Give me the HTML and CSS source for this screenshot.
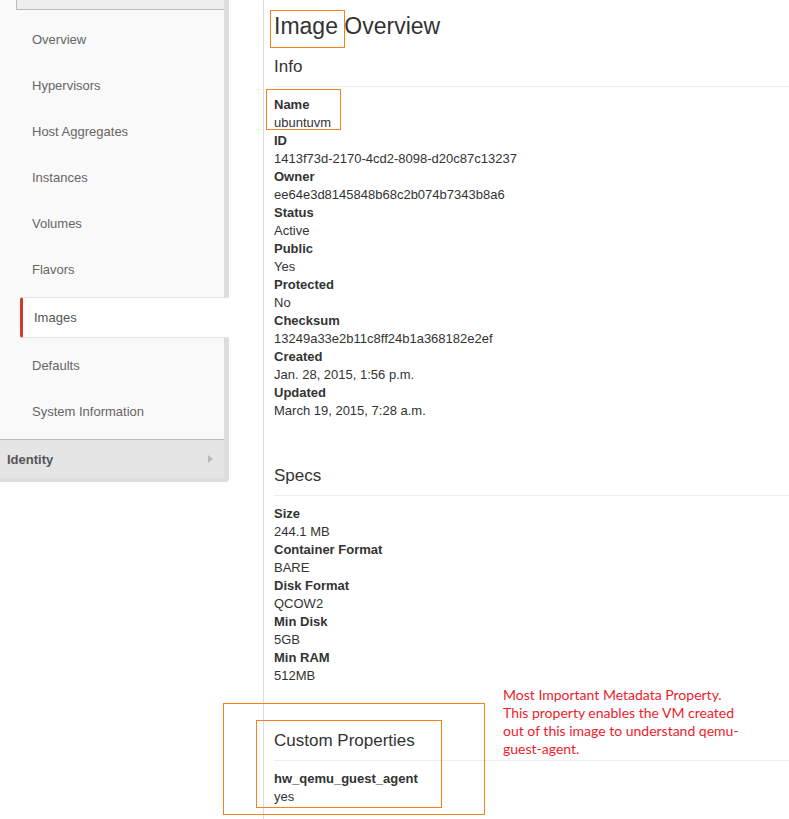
FILE: index.html
```html
<!DOCTYPE html>
<html>
<head>
<meta charset="utf-8">
<title>Image Overview</title>
<link rel="stylesheet" href="styles.css">
</head>
<body>
<div class="page">
  <aside class="sidebar">
    <div class="nav">
      <div class="nav-inner">
        <div class="nav-top"></div>
        <ul class="nav-list">
          <li class="nav-item">Overview</li>
          <li class="nav-item">Hypervisors</li>
          <li class="nav-item">Host Aggregates</li>
          <li class="nav-item">Instances</li>
          <li class="nav-item">Volumes</li>
          <li class="nav-item">Flavors</li>
          <li class="nav-item active">Images</li>
          <li class="nav-item">Defaults</li>
          <li class="nav-item">System Information</li>
        </ul>
        <div class="nav-section">
          <span>Identity</span>
          <span class="caret"></span>
        </div>
      </div>
    </div>
  </aside>
  <main class="main">
    <h1 class="title">Image Overview</h1>

    <h3 class="section-title first">Info</h3>
    <hr class="rule">
    <dl class="props">
      <dt>Name</dt><dd>ubuntuvm</dd>
      <dt>ID</dt><dd>1413f73d-2170-4cd2-8098-d20c87c13237</dd>
      <dt>Owner</dt><dd>ee64e3d8145848b68c2b074b7343b8a6</dd>
      <dt>Status</dt><dd>Active</dd>
      <dt>Public</dt><dd>Yes</dd>
      <dt>Protected</dt><dd>No</dd>
      <dt>Checksum</dt><dd>13249a33e2b11c8ff24b1a368182e2ef</dd>
      <dt>Created</dt><dd>Jan. 28, 2015, 1:56 p.m.</dd>
      <dt>Updated</dt><dd>March 19, 2015, 7:28 a.m.</dd>
    </dl>

    <h3 class="section-title">Specs</h3>
    <hr class="rule">
    <dl class="props">
      <dt>Size</dt><dd>244.1 MB</dd>
      <dt>Container Format</dt><dd>BARE</dd>
      <dt>Disk Format</dt><dd>QCOW2</dd>
      <dt>Min Disk</dt><dd>5GB</dd>
      <dt>Min RAM</dt><dd>512MB</dd>
    </dl>

    <h3 class="section-title">Custom Properties</h3>
    <hr class="rule">
    <dl class="props">
      <dt>hw_qemu_guest_agent</dt><dd>yes</dd>
    </dl>
  </main>

  <div class="mark mark-title"></div>
  <div class="mark mark-name"></div>
  <div class="mark mark-outer"></div>
  <div class="mark mark-inner"></div>
  <p class="note">Most Important Metadata Property.<br>This property enables the VM created<br>out of this image to understand qemu-<br>guest-agent.</p>
</div>
</body>
</html>
```

FILE: styles.css
```css
html, body {
  margin: 0;
  padding: 0;
  background: #ffffff;
}

body {
  font-family: "Liberation Sans", Arial, Helvetica, sans-serif;
  font-size: 13px;
  color: #333333;
}

.page {
  position: relative;
  display: flex;
  width: 789px;
  min-height: 819px;
  overflow: hidden;
}

/* ---------- sidebar ---------- */
.sidebar {
  width: 229px;
  flex: none;
  align-self: flex-start;
}

.nav {
  background: #dddddd;
  padding: 0 5px 4px 0;
  border-bottom-right-radius: 4px;
}

.nav-inner {
  background: #f9f9f9;
}

.nav-top {
  height: 9px;
  margin-left: 16px;
  background: #eeeeee;
  border-left: 1px solid #bbbbbb;
  border-bottom: 1px solid #bbbbbb;
}

.nav-list {
  list-style: none;
  margin: 0;
  padding: 6px 0 5px 0;
}

.nav-item {
  display: flex;
  align-items: center;
  height: 46px;
  padding-left: 32px;
  color: #666666;
  font-size: 13px;
}

.nav-item.active {
  height: 39px;
  margin: 5px -5px 4px 20px;
  padding-left: 11px;
  background: #ffffff;
  border-top: 1px solid #e3e3e3;
  border-bottom: 1px solid #e3e3e3;
  border-left: 3px solid #d23a2b;
  border-radius: 3px 0 0 3px;
  color: #555555;
}

.nav-section {
  display: flex;
  align-items: center;
  justify-content: space-between;
  height: 38px;
  padding: 0 11px 0 7px;
  background: #e5e5e5;
  border-top: 1px solid #bbbbbb;
  font-weight: bold;
  color: #555555;
}

.caret {
  width: 0;
  height: 0;
  border-top: 4px solid transparent;
  border-bottom: 4px solid transparent;
  border-left: 5px solid #bbbbbb;
}

/* ---------- main ---------- */
.main {
  flex: 1;
  margin-left: 34px;
  padding: 1px 0 0 10px;
  border-left: 1px solid #dddddd;
  min-height: 818px;
}

.title {
  margin: 0;
  padding-top: 10px;
  font-size: 23px;
  line-height: 30px;
  font-weight: normal;
  color: #333333;
}

.section-title {
  margin: 46px 0 0 0;
  font-size: 17px;
  line-height: 20px;
  font-weight: normal;
  color: #333333;
}

.section-title.first {
  margin-top: 16px;
}

.rule {
  margin: 9px 0 0 0;
  border: 0;
  border-top: 1px solid #eeeeee;
  height: 0;
}

.props {
  margin: 9px 0 0 0;
  line-height: 18px;
}

.props dt {
  font-weight: bold;
  color: #333333;
}

.props dd {
  margin: 0;
  color: #333333;
}

/* ---------- annotations ---------- */
.mark {
  position: absolute;
  border: 1px solid #f5821f;
  box-sizing: border-box;
}

.mark-title { left: 270px; top: 10px; width: 75px; height: 38px; }
.mark-name  { left: 266px; top: 89px; width: 75px; height: 41px; }
.mark-outer { left: 223px; top: 703px; width: 262px; height: 112px; }
.mark-inner { left: 256px; top: 720px; width: 186px; height: 88px; }

.note {
  position: absolute;
  left: 503px;
  top: 686px;
  margin: 0;
  font-family: Lato, "Open Sans", sans-serif;
  font-size: 14px;
  line-height: 18px;
  color: #ec1c2c;
}
```
